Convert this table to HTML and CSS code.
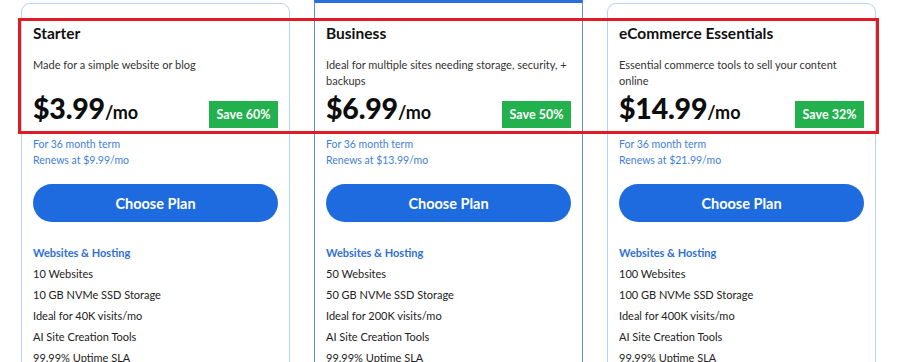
FILE: index.html
```html
<!DOCTYPE html>
<html lang="en">
<head>
<meta charset="utf-8">
<title>Plans</title>
<link rel="stylesheet" href="styles.css">
</head>
<body>
<div class="page">
  <div class="plans">
    <div class="card">
      <h2 class="title">Starter</h2>
      <p class="desc">Made for a simple website or blog</p>
      <div class="price-row">
        <div class="price"><span class="amount">$3.99</span><span class="per">/mo</span></div>
        <div class="save">Save 60%</div>
      </div>
      <p class="term">For 36 month term<br>Renews at $9.99/mo</p>
      <button class="choose">Choose Plan</button>
      <h3 class="group">Websites &amp; Hosting</h3>
      <ul class="features">
        <li>10 Websites</li>
        <li>10 GB NVMe SSD Storage</li>
        <li>Ideal for 40K visits/mo</li>
        <li>AI Site Creation Tools</li>
        <li>99.99% Uptime SLA</li>
      </ul>
    </div>
    <div class="card featured">
      <h2 class="title">Business</h2>
      <p class="desc">Ideal for multiple sites needing storage, security, + backups</p>
      <div class="price-row">
        <div class="price"><span class="amount">$6.99</span><span class="per">/mo</span></div>
        <div class="save">Save 50%</div>
      </div>
      <p class="term">For 36 month term<br>Renews at $13.99/mo</p>
      <button class="choose">Choose Plan</button>
      <h3 class="group">Websites &amp; Hosting</h3>
      <ul class="features">
        <li>50 Websites</li>
        <li>50 GB NVMe SSD Storage</li>
        <li>Ideal for 200K visits/mo</li>
        <li>AI Site Creation Tools</li>
        <li>99.99% Uptime SLA</li>
      </ul>
    </div>
    <div class="card">
      <h2 class="title">eCommerce Essentials</h2>
      <p class="desc">Essential commerce tools to sell your content online</p>
      <div class="price-row">
        <div class="price"><span class="amount">$14.99</span><span class="per">/mo</span></div>
        <div class="save">Save 32%</div>
      </div>
      <p class="term">For 36 month term<br>Renews at $21.99/mo</p>
      <button class="choose">Choose Plan</button>
      <h3 class="group">Websites &amp; Hosting</h3>
      <ul class="features">
        <li>100 Websites</li>
        <li>100 GB NVMe SSD Storage</li>
        <li>Ideal for 400K visits/mo</li>
        <li>AI Site Creation Tools</li>
        <li>99.99% Uptime SLA</li>
      </ul>
    </div>
  </div>
  <div class="highlight"></div>
</div>
</body>
</html>
```
FILE: styles.css
```css
html, body {
  margin: 0;
  padding: 0;
  background: #ffffff;
}
body {
  width: 900px;
  height: 362px;
  overflow: hidden;
  font-family: "Lato", "Liberation Sans", sans-serif;
  color: #222;
}
.page {
  position: relative;
  height: 362px;
  overflow: hidden;
}
.plans {
  display: grid;
  grid-template-columns: 269px 269px 269px;
  column-gap: 24px;
  padding: 3px 0 0 21px;
  align-items: start;
}
.card {
  border: 1px solid #b8d2f1;
  border-radius: 9px;
  padding: 19px 11px 0 11px;
  height: 400px;
  box-sizing: border-box;
}
.card.featured {
  margin-top: -3px;
  border: 1px solid #5b8fe3;
  border-top: 3px solid #2a6ddc;
  border-radius: 0;
  padding-top: 20px;
}
.title {
  margin: 0;
  font-size: 15.5px;
  line-height: 20px;
  font-weight: 700;
  color: #111;
}
.desc {
  margin: 14px 0 0;
  font-size: 11px;
  line-height: 16px;
  min-height: 32px;
  color: #333;
}
.price-row {
  display: flex;
  justify-content: space-between;
  align-items: flex-end;
  margin-top: 7px;
  height: 33px;
}
.price {
  line-height: 32px;
  color: #0d0d0d;
}
.amount {
  font-size: 28.5px;
  font-weight: 900;
  letter-spacing: -0.2px;
}
.per {
  font-size: 18px;
  font-weight: 700;
}
.save {
  background: #22b14c;
  color: #fff;
  font-size: 12.5px;
  font-weight: 700;
  height: 27px;
  line-height: 27px;
  padding: 0 7px;
  box-sizing: border-box;
  width: 69px;
  text-align: center;
  margin-bottom: 1px;
}
.term {
  margin: 7px 0 0;
  font-size: 10.5px;
  line-height: 16px;
  color: #3f7fd8;
}
.choose {
  display: block;
  width: 100%;
  height: 38px;
  margin-top: 16px;
  border: none;
  border-radius: 19px;
  background: #1d6bdf;
  color: #fff;
  font-family: "Lato", "Liberation Sans", sans-serif;
  font-size: 14.5px;
  font-weight: 700;
  padding: 0;
}
.group {
  margin: 21px 0 0;
  font-size: 11px;
  line-height: 20px;
  font-weight: 700;
  color: #2f6fd6;
}
.features {
  list-style: none;
  margin: 0;
  padding: 0;
  font-size: 11px;
  line-height: 21px;
  color: #222;
}
.highlight {
  position: absolute;
  left: 18px;
  top: 18px;
  width: 861px;
  height: 116px;
  box-sizing: border-box;
  border: 3px solid #e01b24;
  pointer-events: none;
}
```
